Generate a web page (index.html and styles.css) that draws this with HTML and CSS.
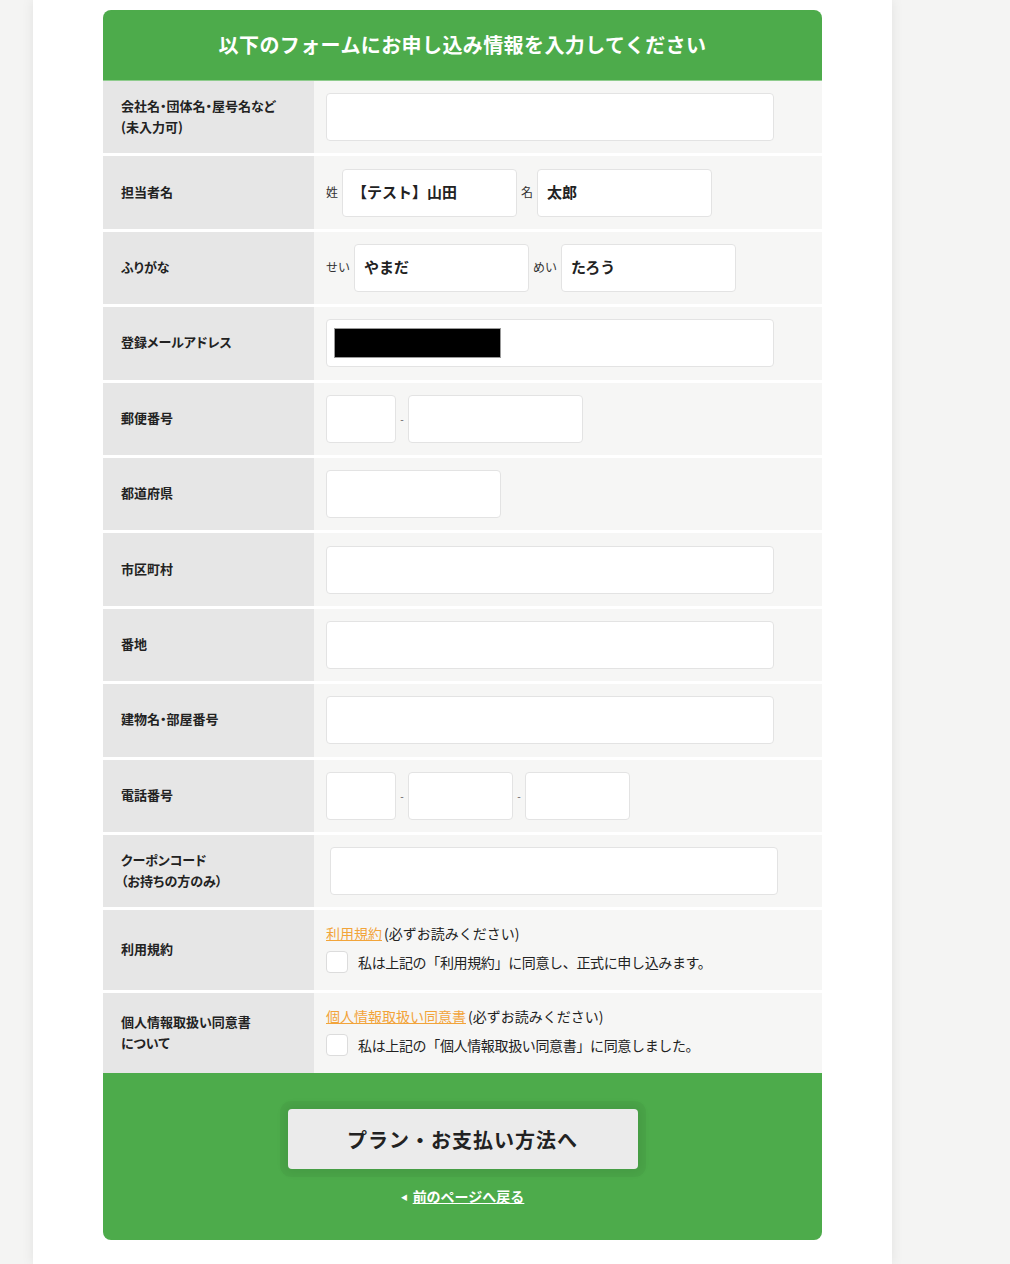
FILE: index.html
```html
<!DOCTYPE html>
<html lang="ja">

<head>
    <meta charset="UTF-8">
    <meta name="viewport" content="width=device-width, initial-scale=1.0">
    <title>お申し込み情報の入力</title>
    <link rel="stylesheet" href="styles.css">
</head>

<body>
    <div class="page">
        <form class="entry" id="entryForm">
            <h1 class="entry-title">以下のフォームにお申し込み情報を入力してください</h1>

            <div class="row">
                <div class="row-label">会社名・団体名・屋号名など<br>(未入力可)</div>
                <div class="row-field">
                    <input type="text" class="box box-full">
                </div>
            </div>

            <div class="row">
                <div class="row-label">担当者名</div>
                <div class="row-field">
                    <span class="prefix">姓</span>
                    <input type="text" class="box box-name" value="【テスト】山田">
                    <span class="prefix">名</span>
                    <input type="text" class="box box-name" value="太郎">
                </div>
            </div>

            <div class="row">
                <div class="row-label">ふりがな</div>
                <div class="row-field">
                    <span class="prefix">せい</span>
                    <input type="text" class="box box-name" value="やまだ">
                    <span class="prefix">めい</span>
                    <input type="text" class="box box-name" value="たろう">
                </div>
            </div>

            <div class="row">
                <div class="row-label">登録メールアドレス</div>
                <div class="row-field">
                    <div class="box box-full box-mail"><span class="masked"></span></div>
                </div>
            </div>

            <div class="row">
                <div class="row-label">郵便番号</div>
                <div class="row-field">
                    <input type="text" class="box box-xs">
                    <span class="dash">-</span>
                    <input type="text" class="box box-name">
                </div>
            </div>

            <div class="row">
                <div class="row-label">都道府県</div>
                <div class="row-field">
                    <input type="text" class="box box-name">
                </div>
            </div>

            <div class="row">
                <div class="row-label">市区町村</div>
                <div class="row-field">
                    <input type="text" class="box box-full">
                </div>
            </div>

            <div class="row">
                <div class="row-label">番地</div>
                <div class="row-field">
                    <input type="text" class="box box-full">
                </div>
            </div>

            <div class="row">
                <div class="row-label">建物名・部屋番号</div>
                <div class="row-field">
                    <input type="text" class="box box-full">
                </div>
            </div>

            <div class="row">
                <div class="row-label">電話番号</div>
                <div class="row-field">
                    <input type="text" class="box box-xs">
                    <span class="dash">-</span>
                    <input type="text" class="box box-sm">
                    <span class="dash">-</span>
                    <input type="text" class="box box-sm">
                </div>
            </div>

            <div class="row">
                <div class="row-label">クーポンコード<br>（お持ちの方のみ）</div>
                <div class="row-field coupon">
                    <input type="text" class="box box-full">
                </div>
            </div>

            <div class="row row-agree">
                <div class="row-label">利用規約</div>
                <div class="row-field agree">
                    <p class="agree-note"><a href="#">利用規約</a>(必ずお読みください)</p>
                    <label class="check"><input type="checkbox"><span class="check-box"></span>私は上記の「利用規約」に同意し、正式に申し込みます。</label>
                </div>
            </div>

            <div class="row row-agree row-end">
                <div class="row-label">個人情報取扱い同意書<br>について</div>
                <div class="row-field agree">
                    <p class="agree-note"><a href="#">個人情報取扱い同意書</a>(必ずお読みください)</p>
                    <label class="check"><input type="checkbox"><span class="check-box"></span>私は上記の「個人情報取扱い同意書」に同意しました。</label>
                </div>
            </div>

            <div class="entry-foot">
                <button type="button" class="next">プラン・お支払い方法へ</button>
                <a href="#" class="back"><span class="back-arrow">◀</span><span class="back-text">前のページへ戻る</span></a>
            </div>
        </form>
    </div>
</body>

</html>
```

FILE: styles.css
```css
body {
    margin: 0;
    padding: 0;
    background: #f4f4f3;
    font-family: "Noto Sans CJK JP", "Noto Sans", sans-serif;
    color: #222;
}

.page {
    width: 859px;
    margin-left: 33px;
    min-height: 1264px;
    background: #ffffff;
    box-shadow: 0 0 12px rgba(0, 0, 0, 0.08);
    padding: 10px 70px 0;
    box-sizing: border-box;
}

.entry {
    background: #f6f6f5;
    border-radius: 8px;
    overflow: hidden;
}

.entry-title {
    margin: 0;
    height: 70px;
    line-height: 70px;
    background: #4dab4b;
    color: #fff;
    text-align: center;
    font-size: 20px;
    font-weight: bold;
    letter-spacing: 0.4px;
    border-bottom: 1px solid #8fcc8d;
}

.row {
    display: grid;
    grid-template-columns: 211px 1fr;
    min-height: 72.4px;
    border-bottom: 3px solid #fff;
}

.row-end {
    border-bottom: none;
}

.row-label {
    display: flex;
    align-items: center;
    padding: 0 0 3px 18px;
    background: #e6e6e6;
    font-size: 13px;
    font-weight: bold;
    line-height: 21px;
    font-feature-settings: "palt";
}

.row-field {
    display: flex;
    align-items: center;
    padding: 12px 12px;
    background: #f6f6f5;
}

.coupon {
    padding-left: 16px;
}

.box {
    box-sizing: border-box;
    height: 48px;
    padding: 0 9px 3px;
    border: 1px solid #e3e3e3;
    border-radius: 4px;
    background: #fff;
    font-family: inherit;
    font-size: 15px;
    font-weight: bold;
    color: #222;
    outline: none;
}

.box-full { width: 448px; }
.box-name { width: 175px; }
.box-sm { width: 105px; }
.box-xs { width: 70px; }

.box-mail {
    display: flex;
    align-items: center;
    padding: 0 0 0 7px;
}

.masked {
    display: block;
    width: 167px;
    height: 30px;
    background: #000;
    border: 1px solid #999;
    box-sizing: border-box;
}

.prefix {
    font-size: 12px;
    color: #333;
    margin: 0 4px 3px 0;
}

.box + .prefix {
    margin-left: 4px;
}

.dash {
    width: 12px;
    text-align: center;
    font-size: 10px;
    color: #555;
}

/* agreement rows */
.row-agree {
    min-height: 80px;
}

.agree {
    flex-direction: column;
    align-items: flex-start;
    justify-content: center;
    padding: 10px 12px 15px;
}

.agree-note {
    margin: 0 0 8px;
    font-size: 14px;
    line-height: 20px;
    color: #222;
}

.agree-note a {
    color: #f2a43a;
    text-decoration: underline;
    margin-right: 2px;
}

.check {
    display: flex;
    align-items: center;
    font-size: 14px;
    color: #222;
    letter-spacing: -0.35px;
}

.check input {
    display: none;
}

.check-box {
    width: 20px;
    height: 20px;
    margin-right: 10px;
    border: 1px solid #dcdcdc;
    border-radius: 4px;
    background: #fff;
}

/* footer with buttons */
.entry-foot {
    background: #4dab4b;
    padding: 36px 0 34px;
    display: flex;
    flex-direction: column;
    align-items: center;
}

.next {
    width: 350px;
    height: 60px;
    border: none;
    border-radius: 4px;
    background: #ebebeb;
    box-shadow: 0 0 0 8px rgba(0, 0, 0, 0.03), 0 0 10px 4px rgba(0, 0, 0, 0.06);
    font-family: inherit;
    font-size: 20px;
    font-weight: bold;
    letter-spacing: 1px;
    color: #222;
    cursor: pointer;
}

.back {
    margin-top: 17px;
    color: #fff;
    font-size: 14px;
    font-weight: bold;
    text-decoration: none;
}

.back-arrow {
    font-size: 7px;
    margin-right: 5px;
    vertical-align: 2px;
}

.back-text {
    text-decoration: underline;
}
```
